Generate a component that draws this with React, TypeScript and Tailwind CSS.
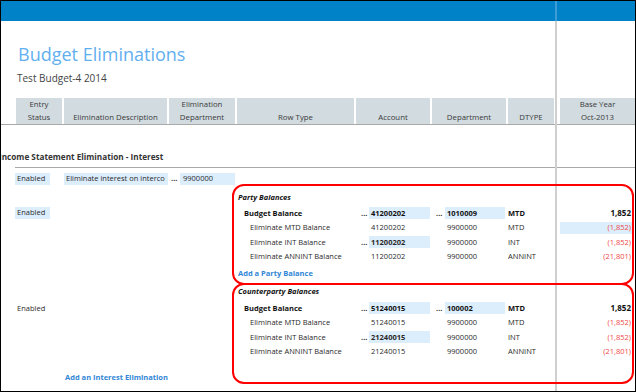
import React from 'react';

type Line = {
  label: string;
  acct: string;
  acctSel?: boolean;
  dept: string;
  deptSel?: boolean;
  dtype: string;
  amt: string;
  amtSel?: boolean;
  head?: boolean;
};

const headers = [
  { w: 'w-[46px]', lines: ['Entry', 'Status'] },
  { w: 'w-[103px]', lines: ['Elimination Description'] },
  { w: 'w-[66px]', lines: ['Elimination', 'Department'] },
  { w: 'w-[117px]', lines: ['Row Type'] },
  { w: 'w-[74px]', lines: ['Account'] },
  { w: 'w-[74px]', lines: ['Department'] },
  { w: 'w-[46px]', lines: ['DTYPE'] },
];

const party: Line[] = [
  { label: 'Budget Balance', acct: '41200202', acctSel: true, dept: '1010009', deptSel: true, dtype: 'MTD', amt: '1,852', head: true },
  { label: 'Eliminate MTD Balance', acct: '41200202', dept: '9900000', dtype: 'MTD', amt: '(1,852)', amtSel: true },
  { label: 'Eliminate INT Balance', acct: '11200202', acctSel: true, dept: '9900000', dtype: 'INT', amt: '(1,852)' },
  { label: 'Eliminate ANNINT Balance', acct: '11200202', dept: '9900000', dtype: 'ANNINT', amt: '(21,801)' },
];

const counterparty: Line[] = [
  { label: 'Budget Balance', acct: '51240015', acctSel: true, dept: '100002', deptSel: true, dtype: 'MTD', amt: '1,852', head: true },
  { label: 'Eliminate MTD Balance', acct: '51240015', dept: '9900000', dtype: 'MTD', amt: '(1,852)' },
  { label: 'Eliminate INT Balance', acct: '21240015', acctSel: true, dept: '9900000', dtype: 'INT', amt: '(1,852)' },
  { label: 'Eliminate ANNINT Balance', acct: '21240015', dept: '9900000', dtype: 'ANNINT', amt: '(21,801)' },
];

const Dots = () => <span className="font-bold text-[#222]">...</span>;

const BalanceRow = ({ row }: { row: Line }) => (
  <div className={`flex h-[14.5px] items-center ${row.head ? 'font-bold text-[#111]' : 'text-[#2a2a2a]'}`}>
    <div className={`w-[122px] ${row.head ? 'pl-[10px]' : 'pl-[16px]'}`}>{row.label}</div>
    <div className="flex w-[76px] items-center">
      <div className="w-[13px] pl-[5px]">{row.acctSel && <Dots />}</div>
      <div className={`flex h-[12px] w-[61px] items-center pl-[2px] ${row.acctSel ? 'bg-[#dcedfc] font-bold' : ''}`}>{row.acct}</div>
    </div>
    <div className="flex w-[76px] items-center">
      <div className="w-[13px] pl-[4px]">{row.deptSel && <Dots />}</div>
      <div className={`flex h-[12px] w-[60px] items-center pl-[2px] ${row.deptSel ? 'bg-[#dcedfc] font-bold' : ''}`}>{row.dept}</div>
    </div>
    <div className="w-[52px]">{row.dtype}</div>
    <div
      className={`flex h-[12px] flex-1 items-center justify-end pr-[1px] ${row.amtSel ? 'bg-[#dcedfc]' : ''} ${
        row.head ? 'text-[8px] text-[#111]' : 'text-[#f04848]'
      }`}
    >
      {row.amt}
    </div>
  </div>
);

export default function App() {
  return (
    <div className="relative h-[392px] w-[636px] overflow-hidden border border-black bg-white font-['Open_Sans','Liberation_Sans',sans-serif] text-[7.5px] text-[#2a2a2a]">
      <div className="h-[20px] bg-[#0082c8]" />

      {/* column divider running down the page */}
      <div className="absolute left-[553.5px] top-0 h-[20px] w-[2px] bg-[#3d9bd6]" />
      <div className="absolute bottom-0 left-[553.5px] top-[20px] w-[2px] bg-[#cfcfcf]" />

      <h1 className="ml-[17px] mt-[21px] text-[18px] leading-[24px] text-[#62aff0]">Budget Eliminations</h1>
      <p className="ml-[16px] mt-[5px] text-[10px] leading-[14px] text-[#444]">Test Budget-4 2014</p>

      <div className="mt-[13px] flex h-[26px] gap-[2px] pl-[15px] text-[7.8px] leading-[13px] text-[#3a3a3a]">
        {headers.map(h => (
          <div key={h.lines.join()} className={`${h.w} flex flex-col items-center justify-end bg-[#d1dbe0]`}>
            {h.lines.map(l => (
              <span key={l}>{l}</span>
            ))}
          </div>
        ))}
        <div className="w-[2px]" />
        <div className="flex flex-1 flex-col items-center justify-end bg-[#d1dbe0]">
          <span>Base Year</span>
          <span>Oct-2013</span>
        </div>
      </div>
      <div className="h-px bg-[#a9a9a9]" />

      <div className="-ml-[2px] mt-[26px] text-[8.2px] font-bold leading-[12px] text-[#333]">Income Statement Elimination - Interest</div>
      <div className="ml-[14px] mt-[4px] h-px bg-[#a9a9a9]" />

      <div className="mt-[5px] flex h-[12px] items-center">
        <div className="ml-[14px] flex h-full w-[35px] items-center bg-[#dcedfc] pl-[2px]">Enabled</div>
        <div className="ml-[14px] flex h-full w-[104px] items-center bg-[#dcedfc] pl-[2px]">Eliminate interest on interco</div>
        <div className="ml-[3px] w-[9px]">
          <Dots />
        </div>
        <div className="flex h-full w-[55px] items-center bg-[#dcedfc] pl-[3px]">9900000</div>
      </div>

      {/* party balances */}
      <div className="-mt-px flex h-[101px]">
        <div className="w-[231px] pt-[23px]">
          <div className="ml-[14px] flex h-[12px] w-[35px] items-center bg-[#dcedfc] pl-[2px]">Enabled</div>
        </div>
        <div className="relative z-10 w-[402px] rounded-[12px] border-2 border-[#ff0000] pt-[5px]">
          <div className="pl-[4px] font-bold italic leading-[12px] text-[#111]">Party Balances</div>
          <div className="mt-[3px]">
            {party.map(r => (
              <BalanceRow key={r.label} row={r} />
            ))}
          </div>
          <div className="mt-[3px] pl-[4px] font-bold leading-[12px] text-[#2f86d6]">Add a Party Balance</div>
        </div>
      </div>

      {/* counterparty balances */}
      <div className="-mt-[2px] flex h-[101px]">
        <div className="flex w-[231px] flex-col justify-between pb-[1px] pt-[19px]">
          <div className="ml-[16px] leading-[12px]">Enabled</div>
          <div className="ml-[64px] font-bold leading-[12px] text-[#2f86d6]">Add an Interest Elimination</div>
        </div>
        <div className="relative z-10 w-[402px] rounded-[12px] border-2 border-[#ff0000]">
          <div className="pl-[4px] font-bold italic leading-[12px] text-[#111]">Counterparty Balances</div>
          <div className="mt-[4px]">
            {counterparty.map(r => (
              <BalanceRow key={r.label} row={r} />
            ))}
          </div>
        </div>
      </div>
    </div>
  );
}
